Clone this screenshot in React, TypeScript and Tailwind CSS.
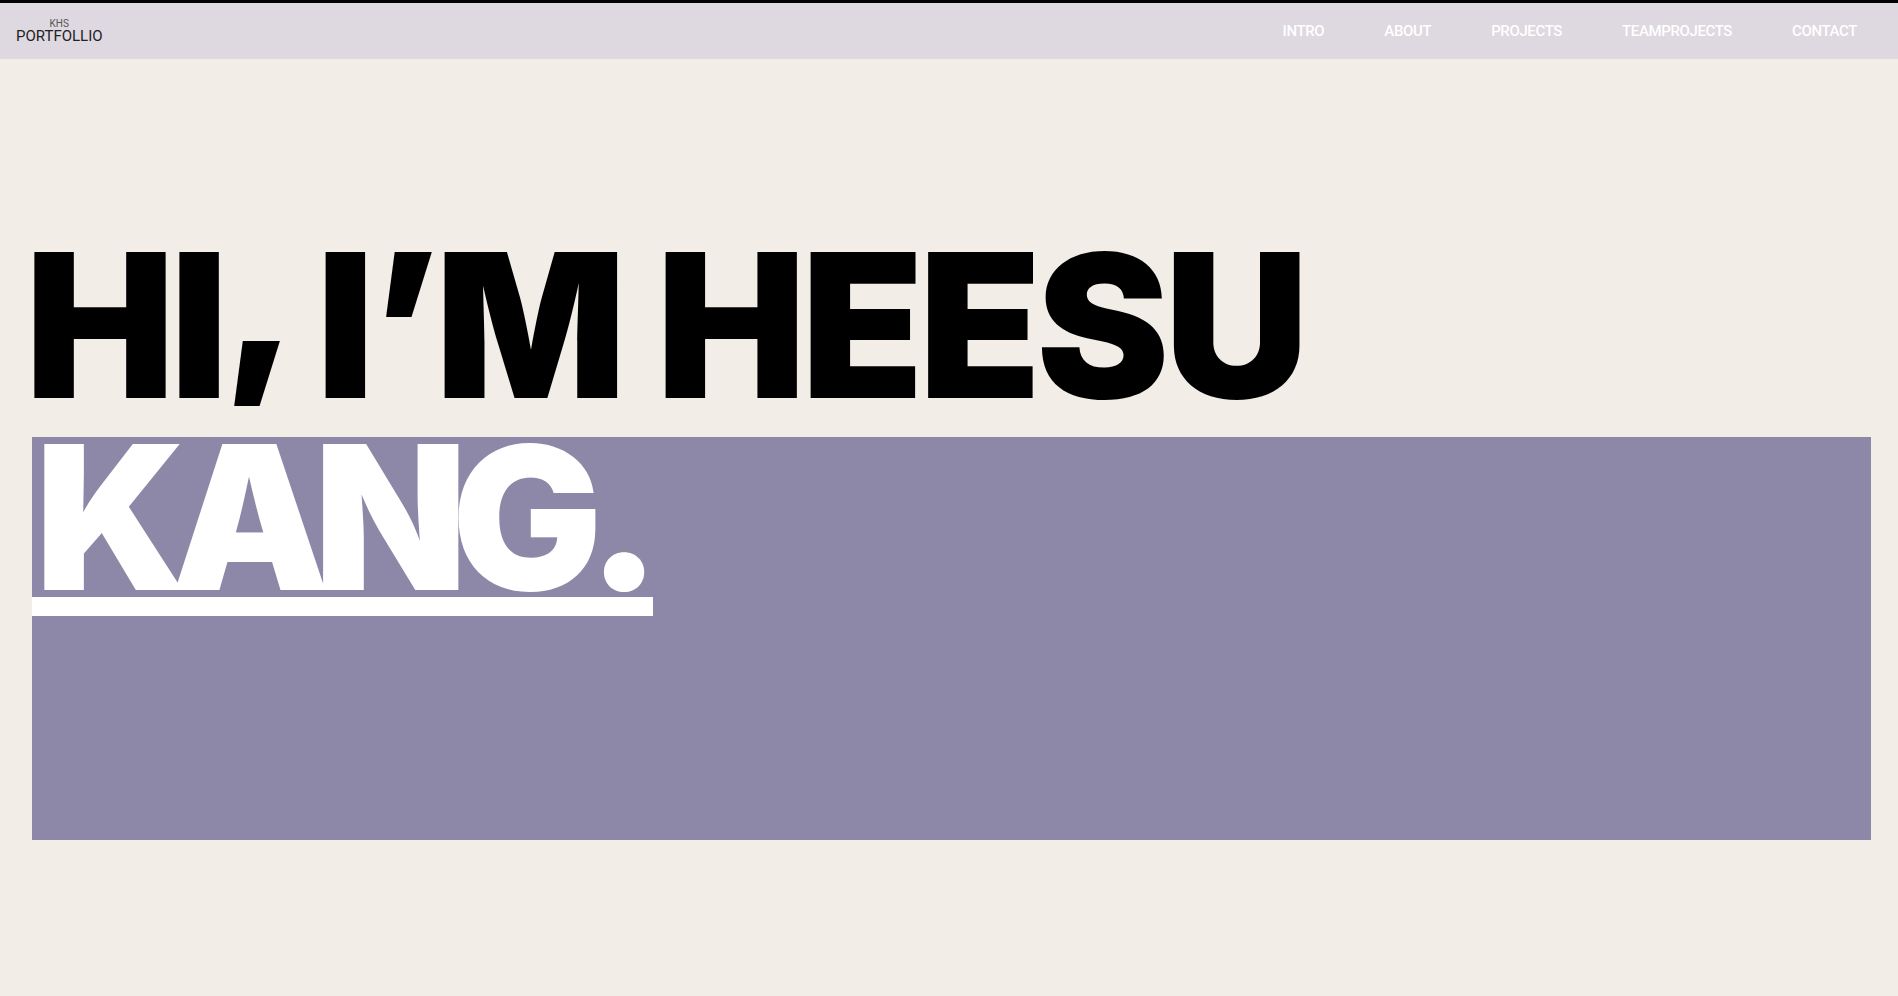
const navItems = ["INTRO", "ABOUT", "PROJECTS", "TEAMPROJECTS", "CONTACT"];

export default function App() {
  return (
    <div className="min-h-screen bg-[#f2ede6] border-t-[3px] border-black">
      {/* Header */}
      <header className="h-[56px] bg-[#ded8e0] flex items-center justify-between pl-4 pr-[41px] font-['Roboto',sans-serif]">
        <div className="flex flex-col items-center">
          <span className="text-[10px] leading-none text-[#555]">KHS</span>
          <span className="text-[15px] leading-none text-[#222]">PORTFOLLIO</span>
        </div>
        <nav className="flex items-center gap-[60px]">
          {navItems.map((item) => (
            <a key={item} className="text-[15px] font-medium text-white tracking-tight cursor-pointer">
              {item}
            </a>
          ))}
        </nav>
      </header>

      {/* Hero */}
      <main className="pt-[166px] pl-8 pr-[27px] font-['Inter',sans-serif]">
        <h1 className="-ml-[7px] text-[200px] leading-none font-black text-black tracking-[-0.025em] whitespace-nowrap">
          HI<span className="relative -top-[34px]">,</span> I’M HEESU
        </h1>
        <div className="mt-[12px] h-[403px] bg-[#8d87a8]">
          <span className="inline-block pl-[3px] pr-[8px] text-[200px] leading-[0.8] font-black text-white tracking-[-0.08em] border-b-[19px] border-white">
            KANG.
          </span>
        </div>
      </main>
    </div>
  );
}
